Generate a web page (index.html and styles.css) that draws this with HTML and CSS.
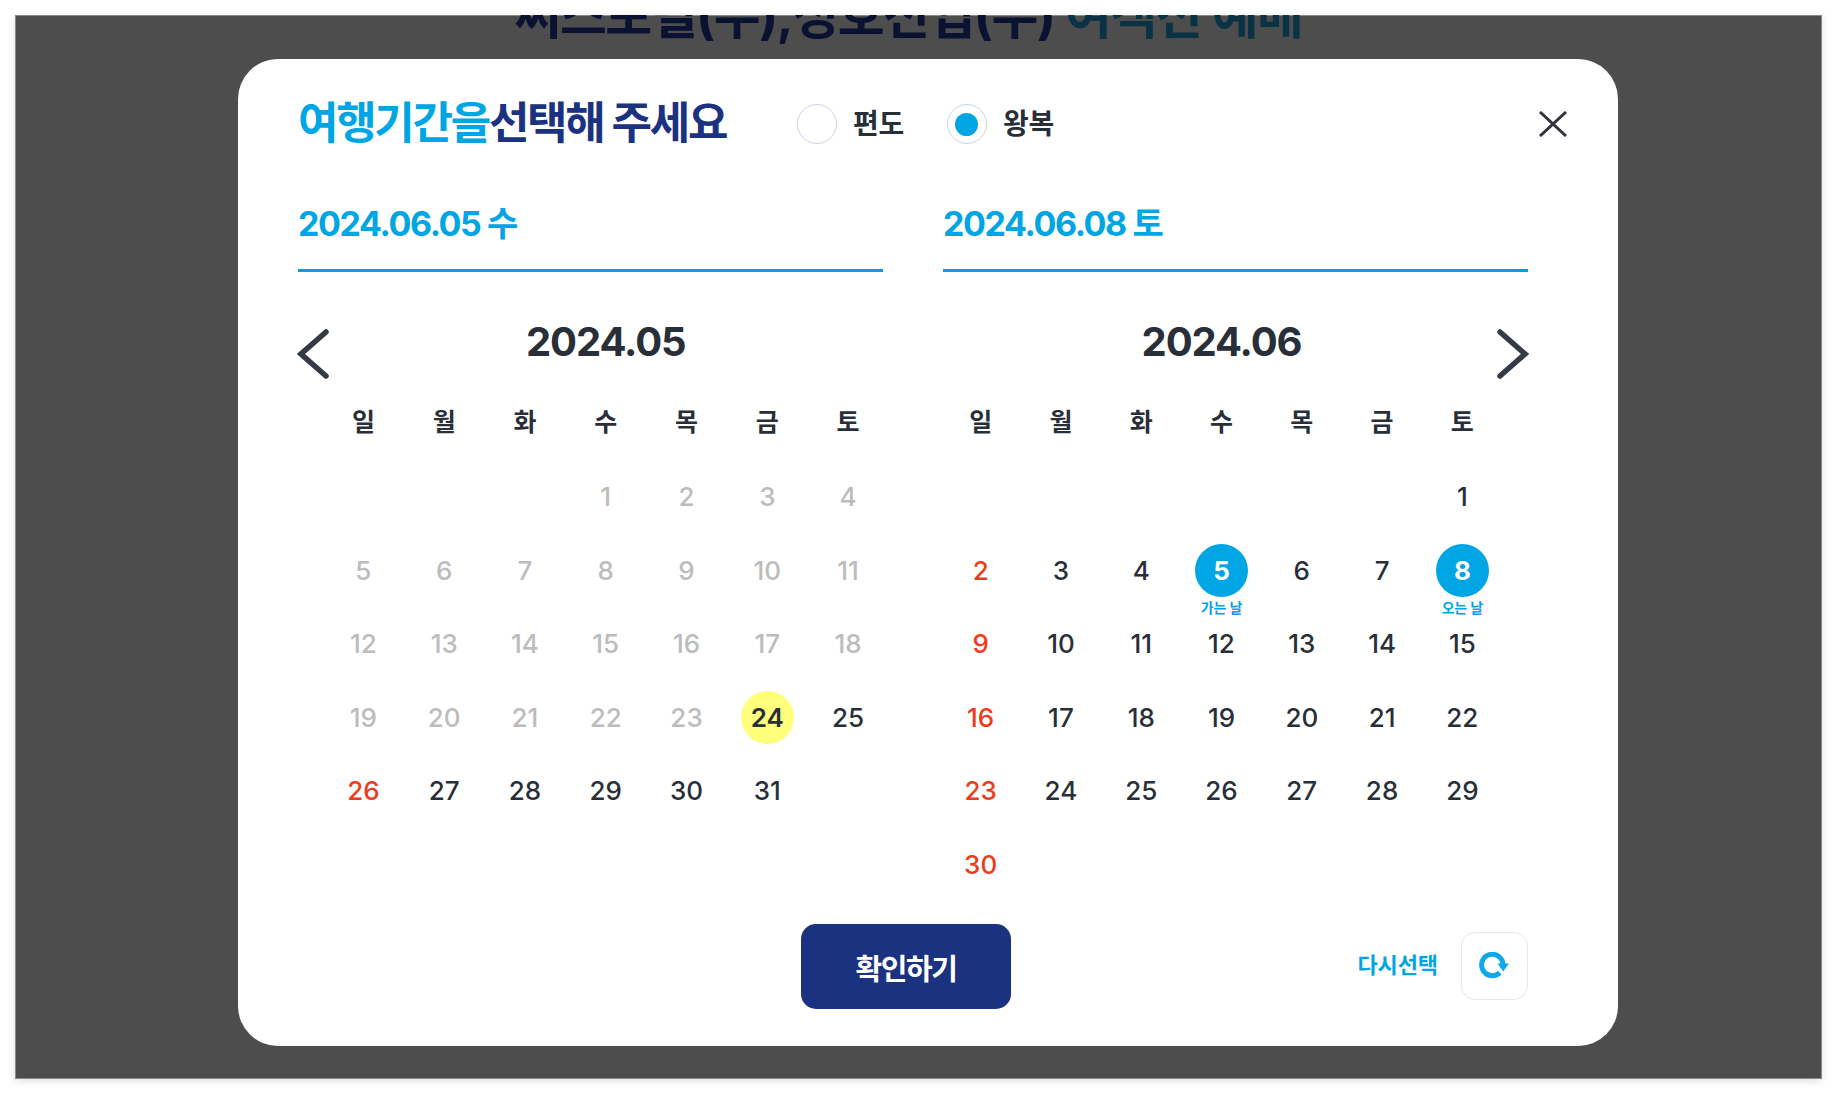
FILE: index.html
```html
<!DOCTYPE html>
<html lang="ko">
<head>
<meta charset="utf-8">
<title>여행기간 선택</title>
<link rel="stylesheet" href="styles.css">
</head>
<body>
<div class="screen">
  <h1 class="back-title">써스포털(주),성호전업(주) <span class="back-accent">여객선 예매</span></h1>
  <section class="modal">
    <header class="head">
      <h2 class="title"><span class="title-accent">여행기간을</span>선택해 주세요</h2>
      <div class="radios">
        <label class="radio"><span class="dot"></span><span class="radio-text">편도</span></label>
        <label class="radio"><span class="dot dot-on"></span><span class="radio-text">왕복</span></label>
      </div>
      <svg class="close" viewBox="0 0 28 26" width="28" height="26"><path d="M1 1L27 25M27 1L1 25" fill="none" stroke="#30343c" stroke-width="3"/></svg>
    </header>
    <div class="dates">
      <div class="date">2024.06.05 수</div>
      <div class="date">2024.06.08 토</div>
    </div>
    <div class="cals">
      <svg class="nav nav-prev" viewBox="0 0 32 50" width="32" height="50"><path d="M29 3L4 25L29 47" fill="none" stroke="#353a45" stroke-width="5.5" stroke-linecap="round" stroke-linejoin="miter"/></svg>
      <svg class="nav nav-next" viewBox="0 0 32 50" width="32" height="50"><path d="M3 3L28 25L3 47" fill="none" stroke="#353a45" stroke-width="5.5" stroke-linecap="round" stroke-linejoin="miter"/></svg>
      <div class="cal cal-left">
        <div class="month">2024.05</div>
        <div class="week"><span>일</span><span>월</span><span>화</span><span>수</span><span>목</span><span>금</span><span>토</span></div>
        <div class="days">
          <span class="day"></span><span class="day"></span><span class="day"></span>
          <span class="day past">1</span><span class="day past">2</span><span class="day past">3</span><span class="day past">4</span>
          <span class="day past">5</span><span class="day past">6</span><span class="day past">7</span><span class="day past">8</span><span class="day past">9</span><span class="day past">10</span><span class="day past">11</span>
          <span class="day past">12</span><span class="day past">13</span><span class="day past">14</span><span class="day past">15</span><span class="day past">16</span><span class="day past">17</span><span class="day past">18</span>
          <span class="day past">19</span><span class="day past">20</span><span class="day past">21</span><span class="day past">22</span><span class="day past">23</span><span class="day today"><b class="mark">24</b></span><span class="day">25</span>
          <span class="day sun">26</span><span class="day">27</span><span class="day">28</span><span class="day">29</span><span class="day">30</span><span class="day">31</span>
        </div>
      </div>
      <div class="cal">
        <div class="month">2024.06</div>
        <div class="week"><span>일</span><span>월</span><span>화</span><span>수</span><span>목</span><span>금</span><span>토</span></div>
        <div class="days">
          <span class="day"></span><span class="day"></span><span class="day"></span><span class="day"></span><span class="day"></span><span class="day"></span><span class="day">1</span>
          <span class="day sun">2</span><span class="day">3</span><span class="day">4</span><span class="day picked"><b class="mark">5</b><small class="cap">가는 날</small></span><span class="day">6</span><span class="day">7</span><span class="day picked"><b class="mark">8</b><small class="cap">오는 날</small></span>
          <span class="day sun">9</span><span class="day">10</span><span class="day">11</span><span class="day">12</span><span class="day">13</span><span class="day">14</span><span class="day">15</span>
          <span class="day sun">16</span><span class="day">17</span><span class="day">18</span><span class="day">19</span><span class="day">20</span><span class="day">21</span><span class="day">22</span>
          <span class="day sun">23</span><span class="day">24</span><span class="day">25</span><span class="day">26</span><span class="day">27</span><span class="day">28</span><span class="day">29</span>
          <span class="day sun">30</span>
        </div>
      </div>
    </div>
    <footer class="foot">
      <button class="confirm" type="button">확인하기</button>
      <div class="reset">
        <span class="reset-label">다시선택</span>
        <button class="reset-btn" type="button" aria-label="다시선택">
          <svg viewBox="0 0 32 28" width="32" height="28"><path d="M20.8 20.6A10.7 10.7 0 1 1 24 12.5" fill="none" stroke="#0ea9ea" stroke-width="5"/><path d="M18.5 11.5H30L24.2 19.5Z" fill="#0ea9ea"/></svg>
        </button>
      </div>
    </footer>
  </section>
</div>
</body>
</html>
```

FILE: styles.css
```css
* { box-sizing: border-box; }
html, body { margin: 0; padding: 0; }
body {
  background: #fff;
  width: 1838px;
  height: 1094px;
  overflow: hidden;
  padding: 15px 16px 15px 15px;
  font-family: Inter, "Noto Sans CJK KR", "Noto Sans", sans-serif;
  color: #282f38;
}
.screen {
  position: relative;
  width: 1807px;
  height: 1064px;
  background: #4d4d4d;
  overflow: hidden;
  box-shadow: inset 0 0 0 1px #8a8a8a, 0 2px 8px rgba(0, 0, 0, 0.12);
}
.back-title {
  margin: -24px 0 0;
  text-align: center;
  font-size: 51px;
  line-height: 50px;
  font-weight: 700;
  letter-spacing: -1.55px;
  color: #0b1130;
  position: relative;
  left: -10px;
}
.back-accent { color: #0a3245; }
.modal {
  position: absolute;
  left: 223px;
  top: 44px;
  width: 1380px;
  height: 987px;
  background: #fff;
  border-radius: 40px;
  padding: 45px 90px 0 60px;
}
.head {
  display: flex;
  align-items: center;
  height: 40px;
}
.title {
  margin: -2px 0 0;
  font-size: 44px;
  line-height: 40px;
  font-weight: 700;
  letter-spacing: -2.3px;
  color: #1b3281;
  width: 499px;
  white-space: nowrap;
}
.title-accent { color: #00a5e3; }
.radios { display: flex; gap: 43px; }
.radio {
  display: flex;
  align-items: center;
  gap: 16px;
  font-size: 28px;
  font-weight: 700;
  letter-spacing: -0.3px;
}
.radio-text { line-height: 40px; margin-top: -1px; }
.dot {
  width: 40px;
  height: 40px;
  border-radius: 50%;
  border: 1px solid #c9d3e6;
  display: flex;
  align-items: center;
  justify-content: center;
  background: #fff;
}
.dot-on::after {
  content: "";
  width: 23px;
  height: 23px;
  border-radius: 50%;
  background: #00a5e3;
}
.close {
  position: absolute;
  left: 1301px;
  top: 52px;
}
.dates {
  display: flex;
  gap: 60px;
  margin-top: 54px;
}
.date {
  width: 585px;
  font-size: 34px;
  line-height: 52px;
  font-weight: 700;
  letter-spacing: -1.4px;
  color: #00a5e3;
  padding-bottom: 19px;
  border-bottom: 3px solid #00a0de;
}
.cals {
  position: relative;
  display: flex;
  gap: 52px;
  margin-top: 45px;
  padding-left: 25px;
}
.nav { position: absolute; top: 12px; }
.nav-prev { left: -1px; }
.nav-next { left: 1199px; }
.cal { width: 562px; flex: none; }
.cal-left { width: 565.5px; }
.month {
  text-align: center;
  font-size: 40px;
  line-height: 50px;
  font-weight: 700;
  letter-spacing: -1.1px;
}
.week {
  display: grid;
  grid-template-columns: repeat(7, 1fr);
  margin-top: 35px;
  height: 40px;
  line-height: 40px;
  text-align: center;
  font-size: 25px;
  font-weight: 700;
}
.days {
  display: grid;
  grid-template-columns: repeat(7, 1fr);
  grid-auto-rows: 73.45px;
  margin-top: 18.1px;
}
.day {
  position: relative;
  display: flex;
  align-items: center;
  justify-content: center;
  font-size: 26px;
  font-weight: 500;
  color: #282f38;
}
.past { color: #bcbcbc; }
.sun { color: #ee3b1c; }
.mark {
  width: 53px;
  height: 53px;
  border-radius: 50%;
  display: flex;
  align-items: center;
  justify-content: center;
  font-weight: 600;
}
.today .mark { background: #ffff7c; color: #282f38; }
.picked .mark { background: #00a5e3; color: #fff; font-weight: 700; }
.cap {
  position: absolute;
  left: 0;
  right: 0;
  top: 65px;
  text-align: center;
  font-size: 14px;
  line-height: 18px;
  font-weight: 600;
  letter-spacing: -0.2px;
  color: #00a5e3;
  white-space: nowrap;
}
.foot {
  display: flex;
  align-items: center;
  margin-top: 23.5px;
  padding-left: 503px;
}
.confirm {
  width: 210px;
  height: 85px;
  border: 0;
  border-radius: 15px;
  background: #1b3281;
  color: #fff;
  font: 700 29px Inter, "Noto Sans CJK KR", sans-serif;
  letter-spacing: -1.4px;
}
.reset {
  display: flex;
  align-items: center;
  gap: 23px;
  margin-left: auto;
}
.reset-label {
  font-size: 22px;
  line-height: 30px;
  margin-top: -3px;
  font-weight: 700;
  letter-spacing: -0.1px;
  color: #00a5e3;
}
.reset-btn {
  width: 67px;
  height: 68px;
  margin-top: -1px;
  padding: 0;
  border: 1px solid #e3e8ef;
  border-radius: 14px;
  background: #fff;
  display: flex;
  align-items: center;
  justify-content: center;
}
```
